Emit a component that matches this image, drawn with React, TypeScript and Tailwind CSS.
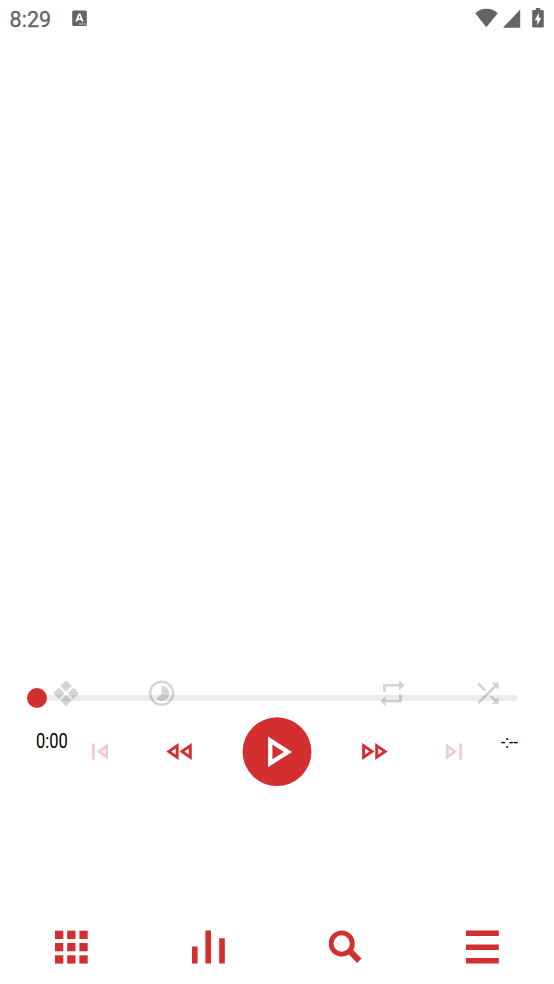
import type { ReactNode } from "react";

type IconProps = { children: ReactNode; className: string; viewBox?: string };

function Icon({ children, className, viewBox = "0 0 24 24" }: IconProps) {
  return (
    <svg viewBox={viewBox} preserveAspectRatio="none" fill="currentColor" className={`block shrink-0 ${className}`}>
      {children}
    </svg>
  );
}

function StatusBar() {
  return (
    <header className="flex h-[38px] shrink-0 items-start text-[#646464]">
      <span className="ml-[9.6px] mt-[7px] w-[62.4px] text-[21.5px] leading-[25px] [-webkit-text-stroke:0.3px_#646464]">8:29</span>
      <Icon viewBox="0 0 15 16" className="mt-[10px] h-4 w-[15px]">
        <rect x="0.2" y="0.6" width="14.6" height="15.4" rx="1.5" />
        <path d="M3.3 11.5 6.4 3.6h2l3.2 7.9H9.5L9 10H5.9l-.5 1.5zM6.5 8.4h2L7.5 5.6z" fill="white" />
        <path d="M7.4 13.4h1.3v1.1H7.4zm2.3 0H11v1.1H9.7zm2.3 0h1.3v1.1H12z" fill="white" />
      </Icon>
      <div className="ml-auto mr-[9px] flex pt-[7px]">
        <Icon viewBox="0.6 0 24 21" className="mr-1 h-[21px] w-6">
          <path d="M.8 6.2C3.9 3.1 7.7 1.7 12 1.7s8.2 1.4 11.3 4.5L12 20.3z" />
        </Icon>
        <Icon viewBox="0.5 0 18 21" className="mr-[11px] h-[21px] w-[18px]">
          <path d="M.5 20.7 17.7 2.6v18.1z" />
        </Icon>
        <Icon viewBox="0.5 0 13 21" className="h-[21px] w-[13px]">
          <path d="M4.3 1h4.4v2h2.2c.8 0 1.4.6 1.4 1.4v14.8c0 .8-.6 1.4-1.4 1.4H2.1c-.8 0-1.4-.6-1.4-1.4V4.4C.7 3.6 1.3 3 2.1 3h2.2z" />
          <path d="M7.3 5.8v5h2.5l-4.1 7.4v-5H3.2z" fill="white" />
        </Icon>
      </div>
    </header>
  );
}

function Seeker() {
  return (
    <div className="relative flex h-[38px] items-center pl-[27px] pr-[37px] pt-px">
      <div className="z-10 size-5 shrink-0 rounded-full bg-[#d32f2f]" />
      <div className="-ml-2.5 h-1.5 grow rounded-full bg-[#ececec]" />
      <div className="absolute inset-x-0 top-0 flex text-black/17">
        <Icon viewBox="0 0 26 26" className="ml-[53px] mt-[2px] size-[26px]">
          <rect x="9" y="1.9" width="8.2" height="8.2" rx="1.5" transform="rotate(45 13.1 6)" />
          <rect x="1.8" y="9.2" width="8.2" height="8.2" rx="1.5" transform="rotate(45 5.9 13.3)" />
          <rect x="16.3" y="9.2" width="8.2" height="8.2" rx="1.5" transform="rotate(45 20.4 13.3)" />
          <rect x="9" y="16.4" width="8.2" height="8.2" rx="1.5" transform="rotate(45 13.1 20.5)" />
        </Icon>
        <Icon viewBox="-0.3 0 24 24" className="ml-[67px] size-[30.6px]">
          <path d="M16.24 7.76C15.07 6.59 13.54 6 12 6v6l-4.24 4.24c2.34 2.34 6.14 2.34 8.49 0 2.34-2.34 2.34-6.14-.01-8.48zM12 2C6.48 2 2 6.48 2 12s4.48 10 10 10 10-4.48 10-10S17.52 2 12 2zm0 18c-4.42 0-8-3.58-8-8s3.58-8 8-8 8 3.58 8 8-3.58 8-8 8z" />
        </Icon>
        <Icon viewBox="-0.3 -0.2 24 24" className="ml-[199.4px] -mt-[0.7px] size-8">
          <path d="M7 7h10v3l4-4-4-4v3H5v6h2V7zm10 10H7v-3l-4 4 4 4v-3h12v-6h-2v4z" />
        </Icon>
        <Icon viewBox="0 -0.2 24 24" className="ml-16 -mt-[0.7px] size-8">
          <path d="M10.59 9.17 5.41 4 4 5.41l5.17 5.17 1.42-1.41zM14.5 4l2.04 2.04L4 18.59 5.41 20 17.96 7.46 20 9.5V4h-5.5zm.33 9.41-1.41 1.41 3.13 3.13L14.5 20H20v-5.5l-2.04 2.04-3.13-3.13z" />
        </Icon>
      </div>
    </div>
  );
}

function Controls() {
  return (
    <div className="flex h-[70px] items-center text-[#d32f2f]">
      <div className="ml-9 mt-[15px] w-8 self-start text-black">
        <span className="inline-block origin-left scale-x-[0.85] text-[19.4px] leading-[22px]">0:00</span>
      </div>
      <Icon viewBox="0 -0.4 24 24" className="ml-4 size-8 opacity-25">
        <path d="M6 6h2v12H6zm3.5 6l8.5 6V6l-8.5 6zm6.5 2.14L12.97 12 16 9.86v4.28z" />
      </Icon>
      <Icon viewBox="-0.4 -0.3 24 24" className="ml-[46px] h-[34px] w-[35px]">
        <path d="M18 9.86v4.28L14.97 12 18 9.86m-9 0v4.28L5.97 12 9 9.86M20 6l-8.5 6 8.5 6V6zm-9 0l-8.5 6 8.5 6V6z" />
      </Icon>
      <button aria-label="Play" className="ml-[45px] mt-0.5 shrink-0">
        <Icon viewBox="0 0 70 70" className="size-[70px]">
          <circle cx="35" cy="34.7" r="34.4" />
          <path
            d="M10 8.64L15.27 12 10 15.36V8.64M8 5v14l11-7L8 5z"
            transform="translate(8.5 8.6) scale(2.19)"
            fill="white"
          />
        </Icon>
      </button>
      <Icon viewBox="-0.2 -0.3 24 24" className="ml-11 h-[34px] w-[35px]">
        <path d="M15 9.86L18.03 12 15 14.14V9.86m-9 0L9.03 12 6 14.14V9.86M13 6v12l8.5-6L13 6zM4 6v12l8.5-6L4 6z" />
      </Icon>
      <Icon viewBox="0 -0.4 24 24" className="ml-[47px] size-8 opacity-25">
        <path d="M6 18l8.5-6L6 6v12zm2-8.14L11.03 12 8 14.14V9.86zM16 6h2v12h-2z" />
      </Icon>
      <div className="ml-[31.3px] mt-[14px] w-[18px] self-start text-black">
        <span className="inline-block origin-left scale-x-[0.82] whitespace-nowrap text-[19px] leading-[24px]">-:--</span>
      </div>
    </div>
  );
}

function NavBar() {
  return (
    <nav className="flex h-[34px] shrink-0 text-[#d32f2f]">
      <Icon viewBox="0 0 34 34" className="ml-[55px] size-[34px]">
        {[0.7, 13, 25.3].map((y) =>
          [0, 12.2, 24.4].map((x) => <rect key={`${x}-${y}`} x={x} y={y} width="8.3" height="8.3" />),
        )}
      </Icon>
      <Icon viewBox="0 0 34 34" className="ml-[103px] size-[34px]">
        <path d="M0 16.5h5.6v17.1H0zM13.4.6H19v33h-5.6zM27.2 8.2h5.6v25.4h-5.6z" />
      </Icon>
      <Icon viewBox="0 0 34 34" className="ml-[103px] size-[34px]">
        <circle cx="12.7" cy="13.5" r="10.6" fill="none" stroke="currentColor" strokeWidth="4.9" />
        <path d="m18.5 22.9 4.3-4.2 9.7 9.9-4.3 4.3z" />
      </Icon>
      <Icon viewBox="0 0 34 34" className="ml-[103px] size-[34px]">
        <path d="M0 .6h32.8v5.5H0zM0 14.4h32.8v5.5H0zM0 28.1h32.8v5.5H0z" />
      </Icon>
    </nav>
  );
}

export default function App() {
  return (
    <div className="flex h-[984px] w-full flex-col overflow-hidden bg-white font-['Roboto',sans-serif]">
      <StatusBar />
      <main className="flex grow flex-col justify-end pb-[144px]">
        <Seeker />
        <Controls />
      </main>
      <NavBar />
      <div className="h-5 shrink-0" />
    </div>
  );
}
